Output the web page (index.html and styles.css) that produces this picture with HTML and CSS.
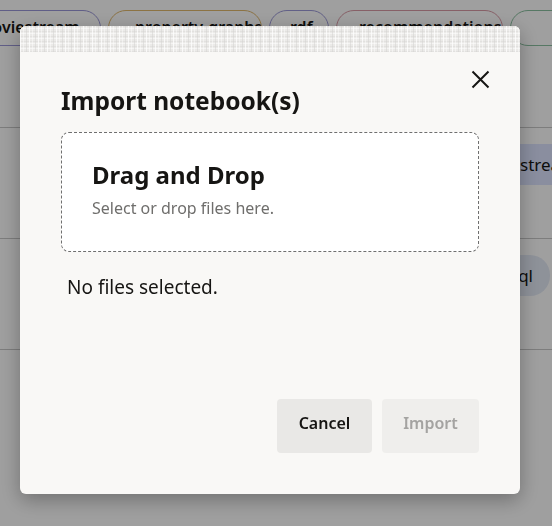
FILE: index.html
```html
<!DOCTYPE html>
<html>
<head>
<meta charset="utf-8">
<link rel="stylesheet" href="styles.css">
</head>
<body>
<div class="page">
  <div class="chips">
    <span class="chip c1">moviestream</span>
    <span class="chip c2">property-graphs</span>
    <span class="chip c3">rdf</span>
    <span class="chip c4">recommendations</span>
    <span class="chip c5">spatial</span>
  </div>
  <div class="row"><span class="tag t1">moviestream</span></div>
  <div class="row"><span class="tag t2">sql</span></div>
</div>
<div class="overlay"></div>
<div class="dialog">
  <div class="dlg-top"></div>
  <div class="dlg-head">
    <h1 class="title">Import notebook(s)</h1>
    <svg class="close" width="19" height="19" viewBox="0 0 19 19"><path d="M1.5 1.5 L17.5 17.5 M17.5 1.5 L1.5 17.5" stroke="#161513" stroke-width="2" fill="none"/></svg>
  </div>
  <div class="drop">
    <div class="drop-title">Drag and Drop</div>
    <div class="drop-sub">Select or drop files here.</div>
  </div>
  <div class="nofiles">No files selected.</div>
  <div class="actions">
    <button class="btn cancel">Cancel</button>
    <button class="btn import">Import</button>
  </div>
</div>
</body>
</html>
```

FILE: styles.css
```css
* { box-sizing: border-box; }
html, body { margin: 0; padding: 0; }
body {
  width: 552px;
  height: 526px;
  overflow: hidden;
  background: #ffffff;
  font-family: "Noto Sans", "Open Sans", sans-serif;
  color: #161513;
}
.page { width: 552px; }
.chips {
  display: flex;
  gap: 7px;
  padding-top: 10px;
  margin-left: -30px;
  height: 128px;
  border-bottom: 1px solid #c8c8c8;
  overflow: hidden;
}
.chip {
  height: 36px;
  border-radius: 18px;
  border: 1px solid #888;
  padding: 0 0 0 20px;
  font-size: 16px;
  font-weight: 600;
  line-height: 32px;
  white-space: nowrap;
  flex: none;
  overflow: hidden;
}
.c1 { border-color: #9b97d8; width: 131px; padding-left: 6px; }
.c2 { border-color: #e0b86c; width: 154px; padding-left: 26px; }
.c3 { border-color: #9d9ad8; width: 60px; padding-left: 20px; }
.c4 { border-color: #d99aa6; width: 167px; padding-left: 22px; }
.c5 { border-color: #8ac0a0; width: 110px; padding-left: 60px; }
.row {
  height: 111px;
  border-bottom: 1px solid #c8c8c8;
  display: flex;
  justify-content: flex-end;
  padding-top: 16px;
  overflow: hidden;
}
.tag {
  height: 41px;
  font-size: 17px;
  line-height: 41px;
  white-space: nowrap;
  flex: none;
}
.t1 { background: #dde4ff; border-radius: 4px; padding: 0 14px; margin-right: -38px; }
.t2 { background: #e4eaf6; border-radius: 20px; padding: 0 17px 0 16px; margin-right: 2px; }
.overlay {
  position: fixed;
  inset: 0;
  background: rgba(0, 0, 0, 0.375);
}
.dialog {
  position: fixed;
  left: 20px;
  top: 26px;
  width: 500px;
  height: 468px;
  background: #f9f8f6;
  border-radius: 6px;
  overflow: hidden;
  box-shadow: 0 6px 20px rgba(0, 0, 0, 0.3);
  display: flex;
  flex-direction: column;
}
.dlg-top {
  height: 26px;
  flex: none;
  background-color: #ebeae8;
  background-image:
    repeating-linear-gradient(90deg, rgba(255,255,255,0.75) 0 1px, transparent 1px 3px, rgba(255,255,255,0.45) 3px 4px, transparent 4px 6px, rgba(210,209,207,0.5) 6px 7px, transparent 7px 9px),
    repeating-linear-gradient(0deg, rgba(220,219,217,0.6) 0 1px, transparent 1px 3px, rgba(255,255,255,0.5) 3px 4px, transparent 4px 5px);
}
.dlg-head {
  display: flex;
  justify-content: space-between;
  align-items: flex-start;
  padding: 26px 30px 0 41px;
}
.title {
  margin: 0;
  font-size: 24.5px;
  font-weight: 700;
  line-height: 34px;
  padding-top: 6px;
}
.close { margin-top: -8px; }
.drop {
  margin: 14px 41px 0 41px;
  height: 120px;
  background: #ffffff;
  border: 1px dashed #6f6f6f;
  border-radius: 8px;
  padding: 26px 30px 0 30px;
}
.drop-title {
  font-size: 24px;
  font-weight: 700;
  line-height: 32px;
}
.drop-sub {
  font-size: 16px;
  color: #6f6e6c;
  line-height: 22px;
  margin-top: 6px;
}
.nofiles {
  margin: 22px 0 0 47px;
  font-size: 19px;
  line-height: 26px;
}
.actions {
  margin-top: auto;
  display: flex;
  justify-content: flex-end;
  gap: 10px;
  padding: 0 41px 41px 0;
}
.btn {
  height: 54px;
  border: none;
  border-radius: 4px;
  font-family: "Noto Sans", "Open Sans", sans-serif;
  font-size: 16px;
  font-weight: 600;
  padding: 0 0 6px 0;
}
.cancel { width: 95px; background: #e9e8e6; color: #161513; }
.import { width: 97px; background: #efeeec; color: #a4a3a1; }
```
